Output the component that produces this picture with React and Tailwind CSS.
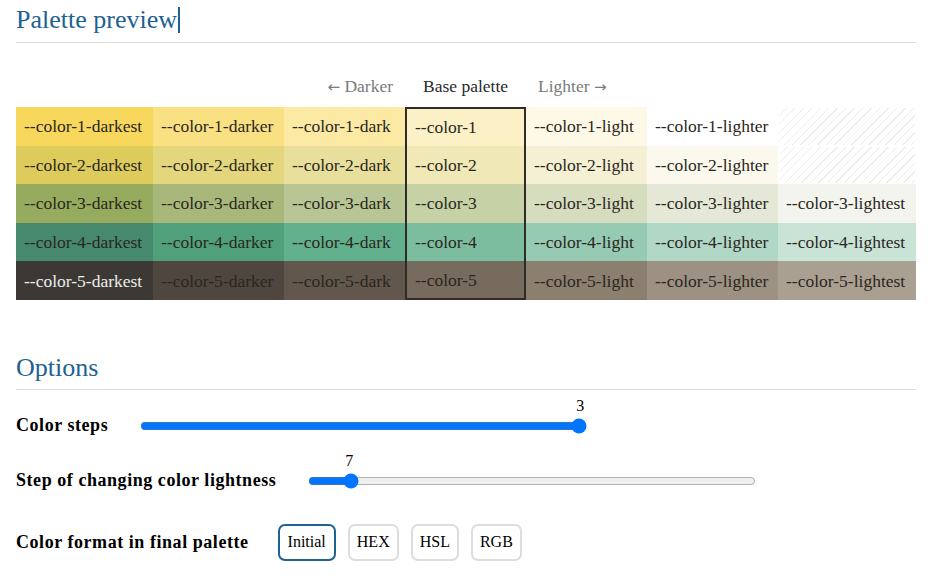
import React from "react";

const rows = [
  ["#f8d85c", "#f9e083", "#fbe9a4", "#fcf1c6", "#fef9e7", "#ffffff", null],
  ["#ddcc5b", "#e3d67c", "#e9df9c", "#f0e8b6", "#f5f0d4", "#fbf9ee", null],
  ["#97ab5e", "#a8b87b", "#b7c694", "#c6d2a6", "#d6ddbf", "#e5e8d6", "#f3f4ed"],
  ["#47896c", "#50a17b", "#63b08e", "#7dbd9f", "#97cab2", "#b1d7c6", "#c9e3d7"],
  ["#3c3833", "#4f473f", "#61574c", "#776b5d", "#8b7f6f", "#9c9182", "#aaa092"],
];
const suffixes = ["-darkest", "-darker", "-dark", "", "-light", "-lighter", "-lightest"];

function Cell({ color, col, row }) {
  const isBase = col === 3;
  let cls = "flex items-center px-2 h-[38.6px] whitespace-nowrap";
  if (isBase) {
    cls += " border-x-2 border-[#2f2c28] pl-[8px]";
    if (row === 0) cls += " border-t-2";
    if (row === 4) cls += " border-b-2";
  }
  if (color === null) {
    return (
      <div className="h-[38.6px] p-[1px] bg-white">
        <div className="w-full h-full bg-[repeating-linear-gradient(135deg,#ffffff_0px,#ffffff_5px,#ececec_5px,#ececec_6px)]" />
      </div>
    );
  }
  const textCls = row === 4 && col === 0 ? "text-[#eeeeee]" : "text-[#2a2620]";
  return (
    <div className={cls + " " + textCls} style={{ backgroundColor: color }}>
      --color-{row + 1}
      {suffixes[col]}
    </div>
  );
}

export default function App() {
  return (
    <div className="px-4 bg-white min-h-[585px] font-['Liberation_Serif',serif] text-black">
      <h2 className="pt-[3px] pb-[6px] border-b border-[#dddddd] text-[26px] leading-[33px] text-[#1d6292] flex items-center">
        <span>Palette preview</span>
        <span className="inline-block w-[1.5px] h-[26px] bg-[#1d6292] ml-[1px]" />
      </h2>

      <div className="mt-[28px] grid grid-cols-[137px_131px_121px_121px_121px_131px_138px] text-[17.5px]">
        <div className="col-span-3 text-right pr-3 text-[#7a7a7a] h-[36px] leading-[30px]">
          <span className="font-['DejaVu_Sans',sans-serif] text-[15px]">←</span> Darker
        </div>
        <div className="text-center text-[#2a2a2a] leading-[30px]">Base palette</div>
        <div className="col-span-3 text-left pl-3 text-[#7a7a7a] leading-[30px]">
          Lighter <span className="font-['DejaVu_Sans',sans-serif] text-[15px]">→</span>
        </div>
        {rows.map((r, ri) =>
          r.map((c, ci) => (
            <Cell key={ri + "-" + ci} color={c} row={ri} col={ci} />
          ))
        )}
      </div>

      <h2 className="mt-[51px] pb-[5px] border-b border-[#dddddd] text-[26px] leading-[33px] text-[#1d6292]">
        Options
      </h2>

      <div className="mt-[21px] flex items-center gap-8 h-[30px]">
        <div className="font-bold text-[18px] tracking-[0.55px]">Color steps</div>
        <div className="relative">
          <input type="range" min="1" max="3" defaultValue="3" className="w-[447px] block" />
          <span className="absolute -top-[24px] left-[436px] text-[16px]">3</span>
        </div>
      </div>

      <div className="mt-[25px] flex items-center gap-8 h-[30px]">
        <div className="font-bold text-[18px] tracking-[0.55px]">Step of changing color lightness</div>
        <div className="relative">
          <input type="range" min="5" max="30" defaultValue="7" className="w-[448px] block" />
          <span className="absolute -top-[24px] left-[37px] text-[16px]">7</span>
        </div>
      </div>

      <div className="mt-[28px] flex items-center gap-[29px]">
        <div className="font-bold text-[18px] tracking-[0.55px]">Color format in final palette</div>
        <div className="flex gap-3">
          <button className="h-[37px] px-[8px] border-2 border-[#1d6292] rounded-[7px] text-[16px] bg-white">Initial</button>
          <button className="h-[37px] px-[7px] border-2 border-[#dddddd] rounded-[7px] text-[16px] bg-white">HEX</button>
          <button className="h-[37px] px-[7px] border-2 border-[#dddddd] rounded-[7px] text-[16px] bg-white">HSL</button>
          <button className="h-[37px] px-[7px] border-2 border-[#dddddd] rounded-[7px] text-[16px] bg-white">RGB</button>
        </div>
      </div>
    </div>
  );
}
